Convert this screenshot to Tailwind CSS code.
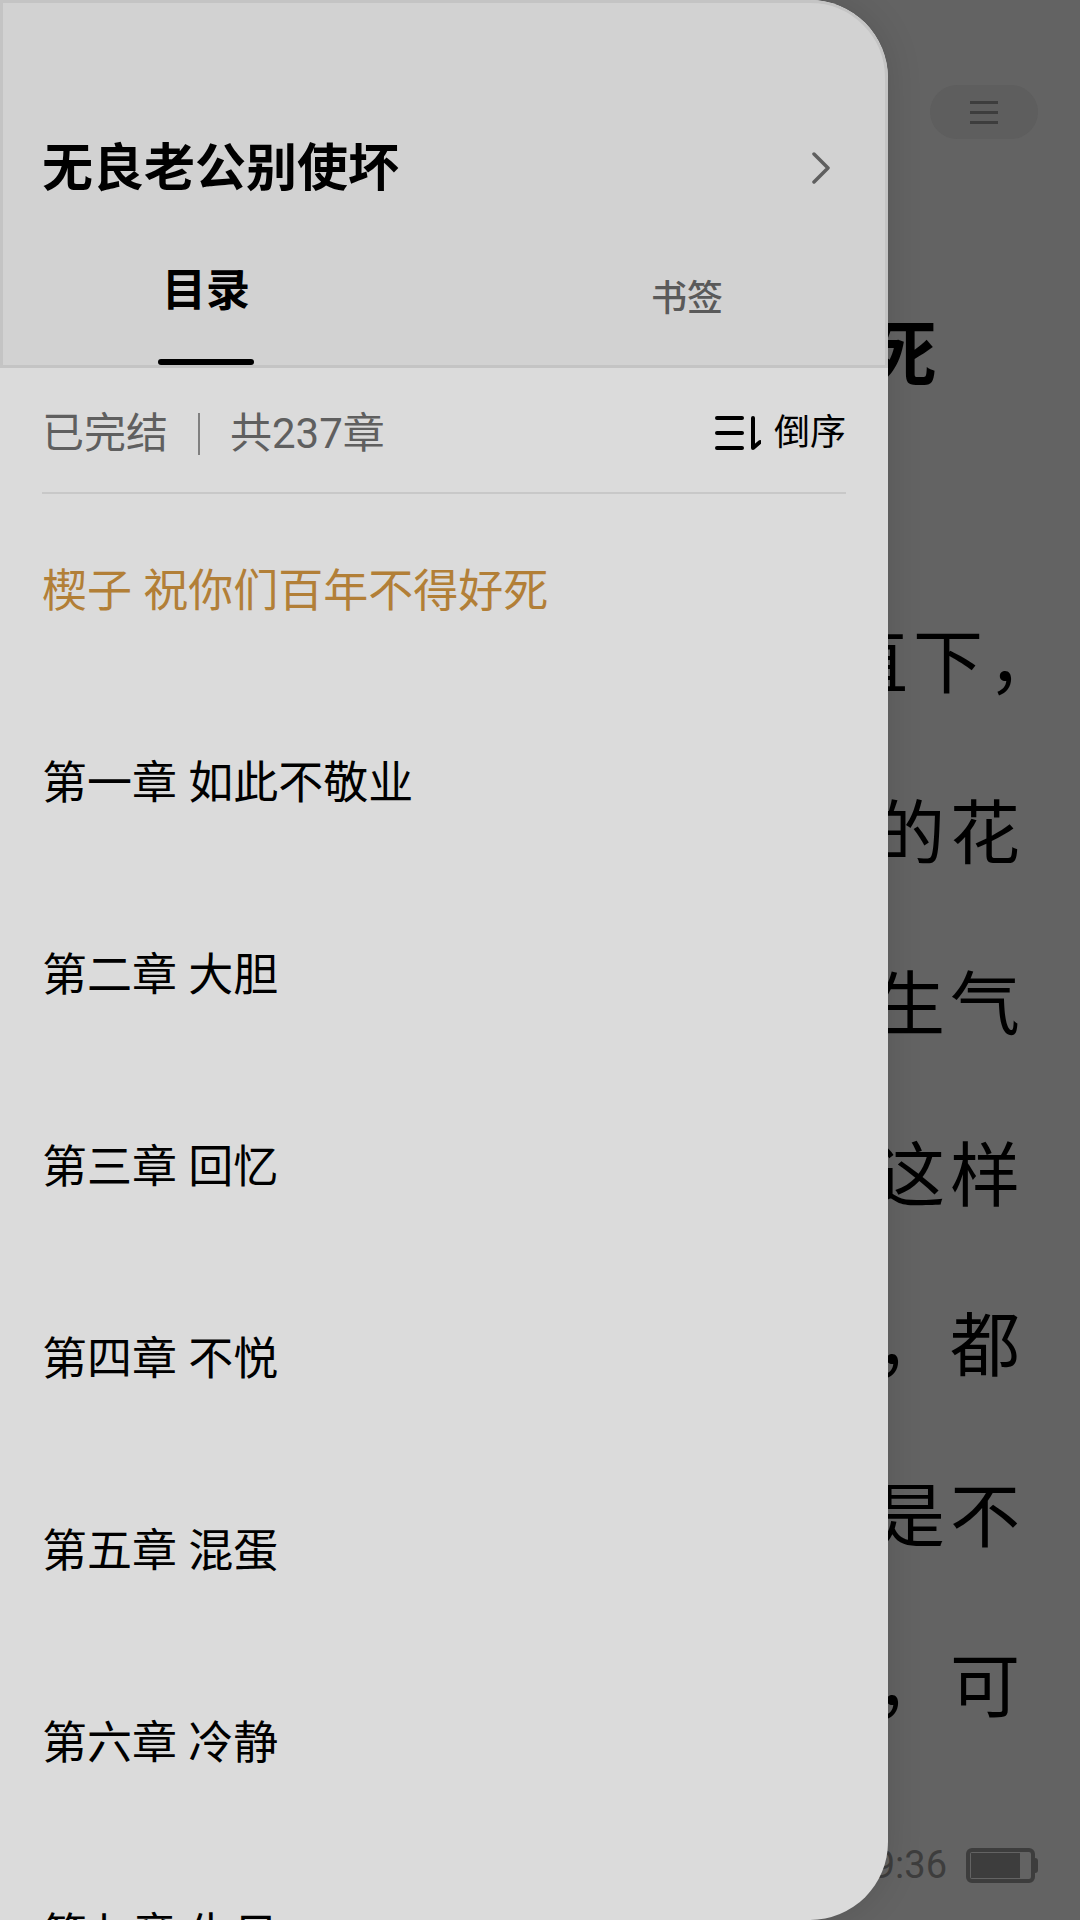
<!DOCTYPE html>
<html lang="zh-CN">
<head>
  <meta charset="UTF-8" />
  <meta name="viewport" content="width=device-width, initial-scale=1.0" />
  <title>无良老公别使坏</title>
  <script src="https://cdn.jsdelivr.net/npm/@tailwindcss/browser@4"></script>
</head>
<body class="bg-[#636363] font-['Roboto','Noto_Sans_CJK_SC',sans-serif]">
  <div class="relative w-[1080px] h-[1920px] overflow-hidden flex flex-col items-end">

    <!-- Reader page behind the drawer -->
    <div class="mt-[85px] mr-[42px] w-[108px] h-[54px] rounded-full bg-[#5e5e5e] flex flex-col items-center justify-center gap-[7px]">
      <span class="block w-[28px] h-[3px] bg-[#3d3d3d]"></span>
      <span class="block w-[28px] h-[3px] bg-[#3d3d3d]"></span>
      <span class="block w-[28px] h-[3px] bg-[#3d3d3d]"></span>
    </div>
    <h2 class="mt-[181px] mr-[143px] text-[72px] leading-[72px] font-bold text-black whitespace-nowrap">不得好死</h2>
    <div class="mt-[187px] mr-[55px] flex flex-col items-end text-[70px] text-black whitespace-nowrap tracking-[5px]">
      <p class="h-[171px] leading-[171px] mr-[-38px]">垂直下，</p>
      <p class="h-[171px] leading-[171px]">开的花</p>
      <p class="h-[170.5px] leading-[170.5px]">在生气</p>
      <p class="h-[170.5px] leading-[170.5px]">是这样</p>
      <p class="h-[170.5px] leading-[170.5px]">说，都</p>
      <p class="h-[170.5px] leading-[170.5px]">还是不</p>
      <p class="h-[170.5px] leading-[170.5px]">的，可</p>
    </div>
    <div class="mt-auto mb-[37px] mr-[45px] flex items-center text-[#3d3d3d]">
      <span class="text-[38px] leading-[35px] mr-[19px]">9:36</span>
      <div class="relative w-[69px] h-[35px] border-[4px] border-[#3d3d3d] rounded-[6px] p-[1px]">
        <div class="w-[49px] h-full bg-[#3d3d3d]"></div>
        <span class="absolute right-[-7px] top-[6px] w-[3px] h-[15px] rounded-r-full bg-[#3d3d3d]"></span>
      </div>
    </div>

    <!-- Chapter drawer -->
    <aside class="absolute left-0 top-0 w-[888px] h-[1920px] rounded-r-[78px] overflow-hidden bg-[#dbdbdb] shadow-[0_0_36px_rgba(0,0,0,0.12)] flex flex-col">
      <header class="h-[368px] shrink-0 bg-[#d2d2d2] border-[3px] border-[#c4c4c4] rounded-tr-[78px] flex flex-col">
        <div class="mt-[136px] h-[60px] pl-[39px] pr-[55px] flex items-center justify-between">
          <h1 class="text-[51px] leading-[60px] font-bold text-black">无良老公别使坏</h1>
          <svg class="w-[18px] h-[32px] -mt-[2px]" viewBox="0 0 18 32" fill="none" stroke="#5f5f5f" stroke-width="3.5" stroke-linecap="round" stroke-linejoin="round"><path d="M2 2 L16 16 L2 30" /></svg>
        </div>
        <nav class="flex-1 pl-[155px] pr-[162px] flex items-start justify-between">
          <div class="w-[96px] flex flex-col items-center">
            <span class="mt-[67px] text-[44px] leading-[50px] font-bold text-black">目录</span>
            <span class="mt-[43px] w-[96px] h-[6px] rounded-full bg-black"></span>
          </div>
          <span class="mt-[75px] text-[36px] leading-[50px] font-medium text-[#5a5a5a]">书签</span>
        </nav>
      </header>

      <div class="mx-[42px] h-[126px] shrink-0 border-b-2 border-[#c8c8c8] pt-[8px] flex items-center justify-between">
        <div class="flex items-center text-[42px] leading-[50px] text-[#5f5f5f]">
          <span>已完结</span>
          <span class="ml-[30px] mr-[30px] w-[2px] h-[42px] bg-[#808080]"></span>
          <span>共237章</span>
        </div>
        <div class="-mt-[2px] flex items-center text-[36px] leading-[50px] text-black">
          <svg class="w-[46px] h-[36px] mr-[13px]" viewBox="0 0 46 36" fill="none" stroke="#000" stroke-width="4" stroke-linecap="round" stroke-linejoin="round">
            <path d="M2 3 H27 M2 18 H27 M2 33 H27" />
            <path d="M38 3 V33 L45 27" />
          </svg>
          <span>倒序</span>
        </div>
      </div>

      <ul class="mt-[2px] text-[45px] text-black pl-[42px]">
        <li class="h-[192px] flex items-center text-[#b27f37]">楔子 祝你们百年不得好死</li>
        <li class="h-[192px] flex items-center">第一章 如此不敬业</li>
        <li class="h-[192px] flex items-center">第二章 大胆</li>
        <li class="h-[192px] flex items-center">第三章 回忆</li>
        <li class="h-[192px] flex items-center">第四章 不悦</li>
        <li class="h-[192px] flex items-center">第五章 混蛋</li>
        <li class="h-[192px] flex items-center">第六章 冷静</li>
        <li class="h-[192px] flex items-center">第七章 生日</li>
      </ul>
    </aside>
  </div>
</body>
</html>
